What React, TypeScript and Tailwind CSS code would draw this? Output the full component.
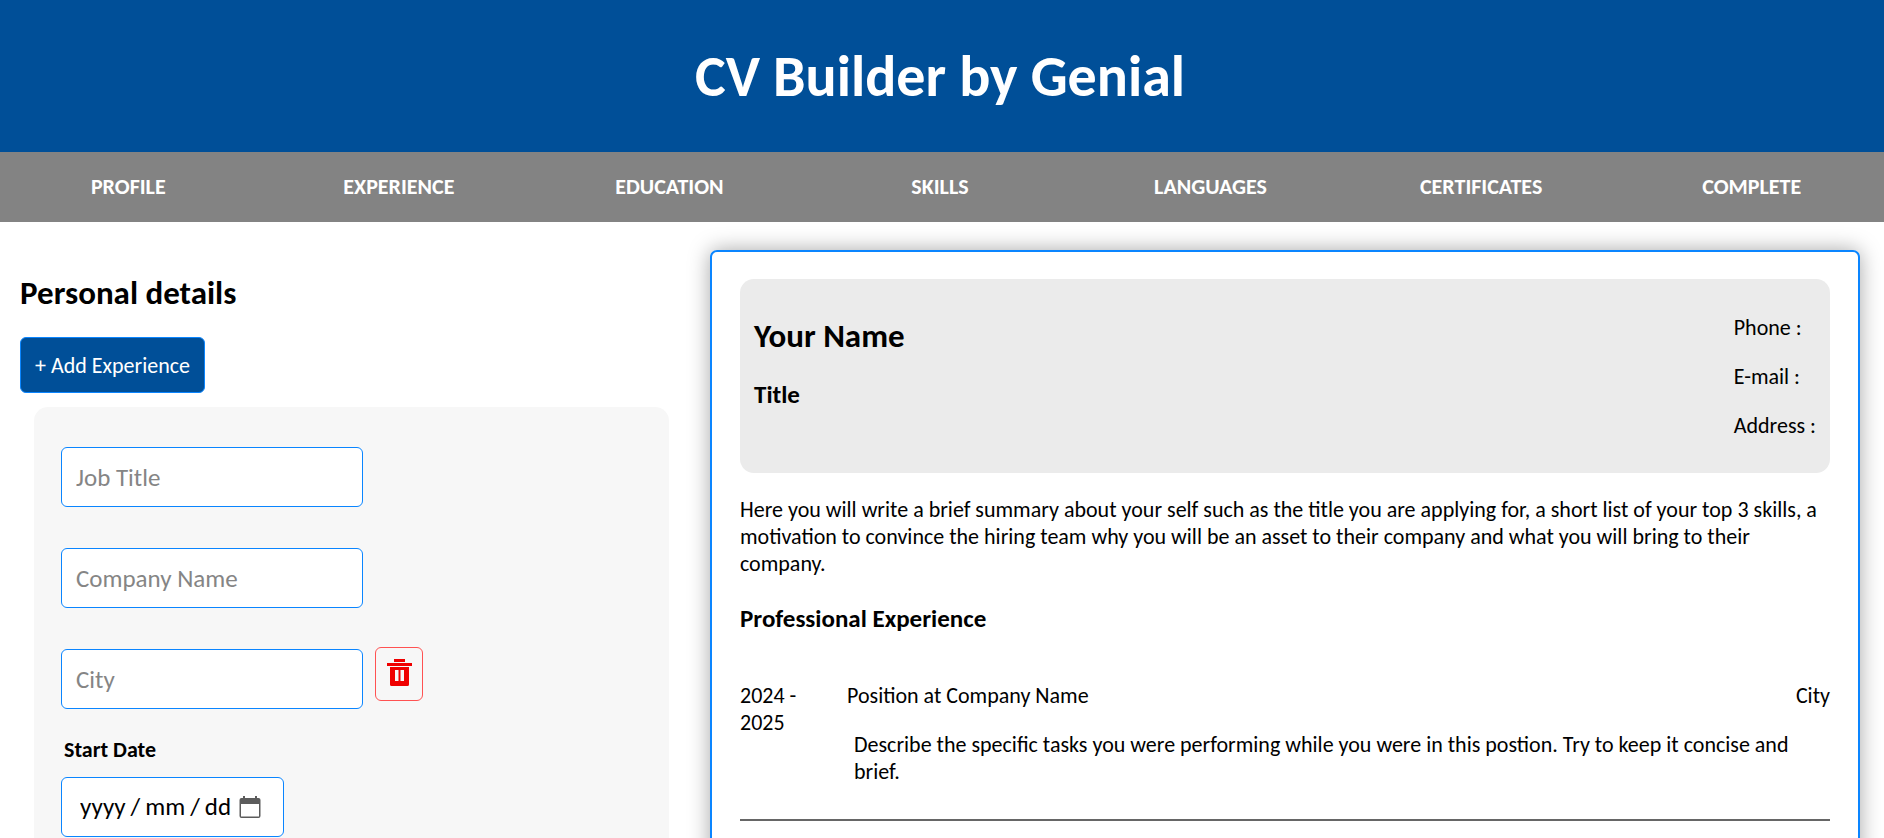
import React from "react";

const sections = ["PROFILE", "EXPERIENCE", "EDUCATION", "SKILLS", "LANGUAGES", "CERTIFICATES", "COMPLETE"];

const fieldClass =
  "h-[60px] rounded-md border border-[#0a85ff] bg-white px-3.5 text-[25px] placeholder:text-[#858585] placeholder:opacity-100 outline-none";

function TextField({ label }: { label: string }) {
  return <input type="text" aria-label={label} placeholder={label} className={`${fieldClass} w-[302px]`} />;
}

function TrashIcon() {
  return (
    <svg viewBox="0 0 26 28" className="ml-px h-7 w-[26px]" fill="#ef0000" aria-hidden="true">
      <rect x="7" y="0" width="11" height="3" />
      <rect x="0" y="4" width="25" height="3" />
      <path fillRule="evenodd" d="M3 8H22V25.5Q22 27 20.500 27H4.500Q3 27 3 25.500ZM8 11V22H11.500V11ZM13.500 11V22H17V11Z" />
    </svg>
  );
}

function CalendarIcon() {
  return (
    <svg viewBox="0 0 22 22" className="h-[22px] w-[22px]" fill="#5c5c5c" aria-hidden="true">
      <path
        fillRule="evenodd"
        d="M4 0H6V2H16V0H18V2H19.500Q21.500 2 21.500 4V20Q21.500 22 19.500 22H2.500Q0.500 22 0.500 20V4Q0.500 2 2.500 2H4ZM2 8V20.500H20V8Z"
      />
    </svg>
  );
}

function EditorPane() {
  return (
    <section className="w-[669px] shrink-0 pl-5 pt-12">
      <h2 className="text-[33px] leading-[46px] font-bold">Personal details</h2>
      <button type="button" className="mt-[21px] h-14 rounded-md border border-[#0a85ff] bg-[#004f98] px-3.5 text-[22px] text-white">
        + Add Experience
      </button>
      <form className="ml-3.5 mt-3.5 flex flex-col items-start rounded-[14px] bg-[#f7f7f7] px-[27px] pb-10 pt-10">
        <TextField label="Job Title" />
        <div className="mt-[41px]">
          <TextField label="Company Name" />
        </div>
        <div className="mt-[39px] flex items-start gap-3">
          <div className="pt-0.5">
            <TextField label="City" />
          </div>
          <button
            type="button"
            aria-label="Delete experience"
            className="flex h-[54px] w-12 items-start justify-center rounded-md border border-[#ff5252] pt-[11px]"
          >
            <TrashIcon />
          </button>
        </div>
        <label htmlFor="start-date" className="ml-[3px] mt-[27px] text-[22px] leading-[27px] font-bold">
          Start Date
        </label>
        <div className={`${fieldClass} mt-3.5 flex w-[223px] items-center justify-between`}>
          <input
            id="start-date"
            type="text"
            placeholder={"yyyy\u2009/\u2009mm\u2009/\u2009dd"}
            className="w-[158px] bg-transparent pl-1 text-[25px] outline-none placeholder:text-black placeholder:opacity-100"
          />
          <button type="button" aria-label="Open calendar" className="mr-2">
            <CalendarIcon />
          </button>
        </div>
      </form>
    </section>
  );
}

function PreviewPane() {
  return (
    <article className="mr-6 mt-7 min-w-0 flex-1 rounded-[7px] border-2 border-[#0a85ff] px-7 pt-[27px] pb-10 text-[22px] leading-[27px] shadow-[0_0_21px_rgba(0,0,0,0.35)]">
      <header className="flex justify-between rounded-[14px] bg-[#ebebeb] px-3.5 pb-5 pt-[35px]">
        <div>
          <h2 className="text-[33px] leading-[44px] font-bold">Your Name</h2>
          <h3 className="mt-[22px] text-[25px] leading-[30px] font-bold">Title</h3>
        </div>
        <div className="flex flex-col gap-[22px] pb-3.5">
          <p>Phone :</p>
          <p>E-mail :</p>
          <p>Address :</p>
        </div>
      </header>
      <p className="mt-[23px]">
        Here you will write a brief summary about your self such as the title you are applying for, a short list of your
        top 3 skills, a motivation to convince the hiring team why you will be an asset to their company and what you
        will bring to their company.
      </p>
      <h3 className="mt-[27px] text-[25px] leading-[30px] font-bold">Professional Experience</h3>
      <div className="mt-12 flex">
        <p className="w-[107px] shrink-0 pr-11">2024 - 2025</p>
        <div className="min-w-0 flex-1">
          <div className="flex justify-between">
            <p>Position at Company Name</p>
            <p>City</p>
          </div>
          <p className="ml-[7px] mt-[22px] pr-10">
            Describe the specific tasks you were performing while you were in this postion. Try to keep it concise and
            brief.
          </p>
        </div>
      </div>
      <hr className="mt-[34px] border-t-2 border-[#666666]" />
    </article>
  );
}

export default function App() {
  return (
    <div className="h-screen overflow-hidden bg-white font-[Calibri,Carlito,Lato,sans-serif] text-black">
      <header className="bg-[#004f98] pt-[41px] pb-[39px] pr-1 text-center text-white">
        <h1 className="text-[58px] leading-[72px] font-bold">CV Builder by Genial</h1>
      </header>
      <nav className="grid grid-cols-7 gap-3.5 bg-[#838383] pr-1 text-center text-[22px] leading-[70px] font-bold text-white">
        {sections.map((name) => (
          <a key={name} href={`#${name.toLowerCase()}`}>
            {name}
          </a>
        ))}
      </nav>
      <main className="flex gap-[41px]">
        <EditorPane />
        <PreviewPane />
      </main>
    </div>
  );
}
